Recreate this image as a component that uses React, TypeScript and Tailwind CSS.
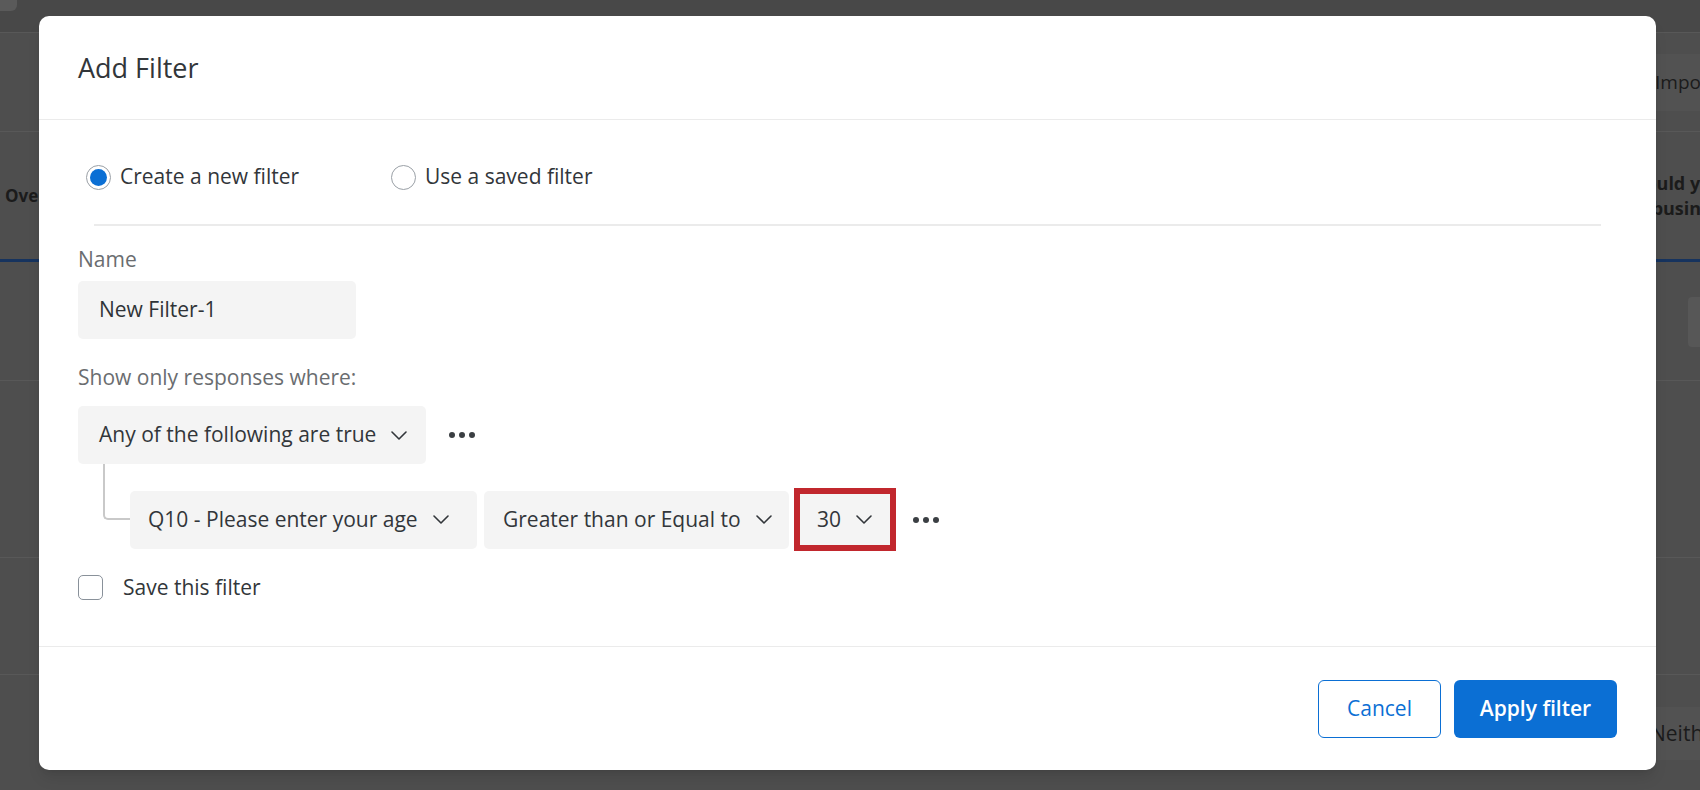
function Chevron() {
  return (
    <svg width="16" height="9" viewBox="0 0 16 9" fill="none" className="shrink-0">
      <polyline points="1,1 8,8 15,1" stroke="#32363a" strokeWidth="1.6" strokeLinecap="round" strokeLinejoin="round" />
    </svg>
  );
}

function Dots() {
  return (
    <div className="flex items-center gap-[4px]">
      <span className="h-[6px] w-[6px] rounded-full bg-[#3b3f43]" />
      <span className="h-[6px] w-[6px] rounded-full bg-[#3b3f43]" />
      <span className="h-[6px] w-[6px] rounded-full bg-[#3b3f43]" />
    </div>
  );
}

function Radio({ checked, label, className = "" }: { checked?: boolean; label: string; className?: string }) {
  return (
    <label className={`flex items-center gap-[9px] ${className}`}>
      <span className="grid h-[25px] w-[25px] place-items-center rounded-full border-[1.5px] border-[#9aa0a6] bg-white">
        {checked && <span className="h-[17px] w-[17px] rounded-full bg-[#0b6fd4]" />}
      </span>
      <span>{label}</span>
    </label>
  );
}

function Select({ label, className = "" }: { label: string; className?: string }) {
  return (
    <div className={`flex h-[58px] items-center rounded-[5px] bg-[#f4f4f4] ${className}`}>
      <span className="whitespace-nowrap">{label}</span>
      <span className="ml-[15px]">
        <Chevron />
      </span>
    </div>
  );
}

// the dimmed page behind the modal
function BackgroundPage() {
  return (
    <div className="flex h-full w-full flex-col bg-[#4e4e4e] text-[#1b1b1b]">
      <div className="h-[33px] shrink-0 border-b border-[#585858] bg-[#484848]">
        <div className="h-[11px] w-[17px] rounded-br-[6px] bg-[#5a5a5a]" />
      </div>
      <div className="flex h-[99px] shrink-0 items-center justify-end border-b border-[#585858]">
        <div className="flex h-[57px] w-[60px] items-center overflow-hidden whitespace-nowrap rounded-l-[4px] bg-[#525252] pl-[15px] text-[19px]">
          Import
        </div>
      </div>
      <div className="flex h-[130px] shrink-0 items-center justify-between border-b-[3px] border-[#16335e]">
        <span className="pl-[5px] text-[17px] font-bold">Overview</span>
        <div className="w-[72px] overflow-hidden whitespace-nowrap text-[18px] font-bold leading-[25px]">
          <div>Would you</div>
          <div>to business</div>
        </div>
      </div>
      <div className="flex h-[119px] shrink-0 items-start justify-end border-b border-[#585858] pt-[35px]">
        <div className="h-[50px] w-[12px] rounded-l-[4px] bg-[#575757]" />
      </div>
      <div className="h-[177px] shrink-0 border-b border-[#585858]" />
      <div className="h-[117px] shrink-0 border-b border-[#585858]" />
      <div className="flex flex-1 items-start justify-end pt-[32px]">
        <div className="flex h-[53px] w-[58px] items-center overflow-hidden whitespace-nowrap rounded-l-[4px] bg-[#525252] pl-[8px] text-[21px]">
          Neither
        </div>
      </div>
    </div>
  );
}

export default function App() {
  return (
    <div className="relative h-[790px] w-[1700px] overflow-hidden font-['Open_Sans',sans-serif]">
      <BackgroundPage />

      <div className="absolute left-[39px] top-[16px] flex h-[754px] w-[1617px] flex-col rounded-[10px] bg-white text-[21px] text-[#32363a] shadow-lg">
        <div className="flex h-[104px] shrink-0 items-center border-b border-[#ebebeb] px-[39px]">
          <h2 className="text-[27px] leading-none text-[#32363a]">Add Filter</h2>
        </div>

        <div className="flex flex-1 flex-col px-[39px] pt-[41px]">
          <div className="flex h-[32px] items-center pl-[8px]">
            <Radio checked label="Create a new filter" className="w-[305px]" />
            <Radio label="Use a saved filter" />
          </div>

          <div className="mx-[16px] mt-[31px] h-[2px] bg-[#ebebeb]" />

          <div className="mt-[19px] leading-[28px] text-[#6a6d70]">Name</div>
          <div className="mt-[8px] flex h-[58px] w-[278px] items-center rounded-[5px] bg-[#f4f4f4] pl-[21px] text-[#2f3337]">
            New Filter-1
          </div>

          <div className="mt-[24px] leading-[28px] text-[#6a6d70]">Show only responses where:</div>
          <div className="mt-[15px] flex items-center">
            <Select label="Any of the following are true" className="h-[57px] w-[348px] pl-[21px]" />
            <span className="ml-[23px]">
              <Dots />
            </span>
          </div>

          <div className="ml-[25px] flex items-start">
            <div className="h-[56px] w-[27px] shrink-0 rounded-bl-[5px] border-b-2 border-l-2 border-[#c9c9c9]" />
            <div className="mt-[24px] flex items-center">
              <Select label="Q10 - Please enter your age" className="w-[347px] pl-[18px]" />
              <Select label="Greater than or Equal to" className="ml-[7px] w-[305px] pl-[19px]" />
              <div className="ml-[5px] flex h-[63px] w-[102px] items-center border-[6px] border-[#c1272d] bg-[#f4f4f4] pl-[17px]">
                <span>30</span>
                <span className="ml-[15px]">
                  <Chevron />
                </span>
              </div>
              <span className="ml-[17px]">
                <Dots />
              </span>
            </div>
          </div>

          <label className="mt-[21px] flex items-center gap-[20px]">
            <span className="h-[25px] w-[25px] rounded-[5px] border-[1.5px] border-[#89919a] bg-white" />
            <span>Save this filter</span>
          </label>
        </div>

        <div className="flex h-[124px] shrink-0 items-center justify-end gap-[13px] border-t border-[#ebebeb] pr-[39px] pt-[1px]">
          <button className="h-[58px] w-[123px] rounded-[6px] border-[1.5px] border-[#0b6fd4] bg-white text-[21px] text-[#0b6fd4]">
            Cancel
          </button>
          <button className="h-[58px] w-[163px] rounded-[6px] bg-[#0b6fd4] text-[21px] font-semibold text-white">
            Apply filter
          </button>
        </div>
      </div>
    </div>
  );
}
